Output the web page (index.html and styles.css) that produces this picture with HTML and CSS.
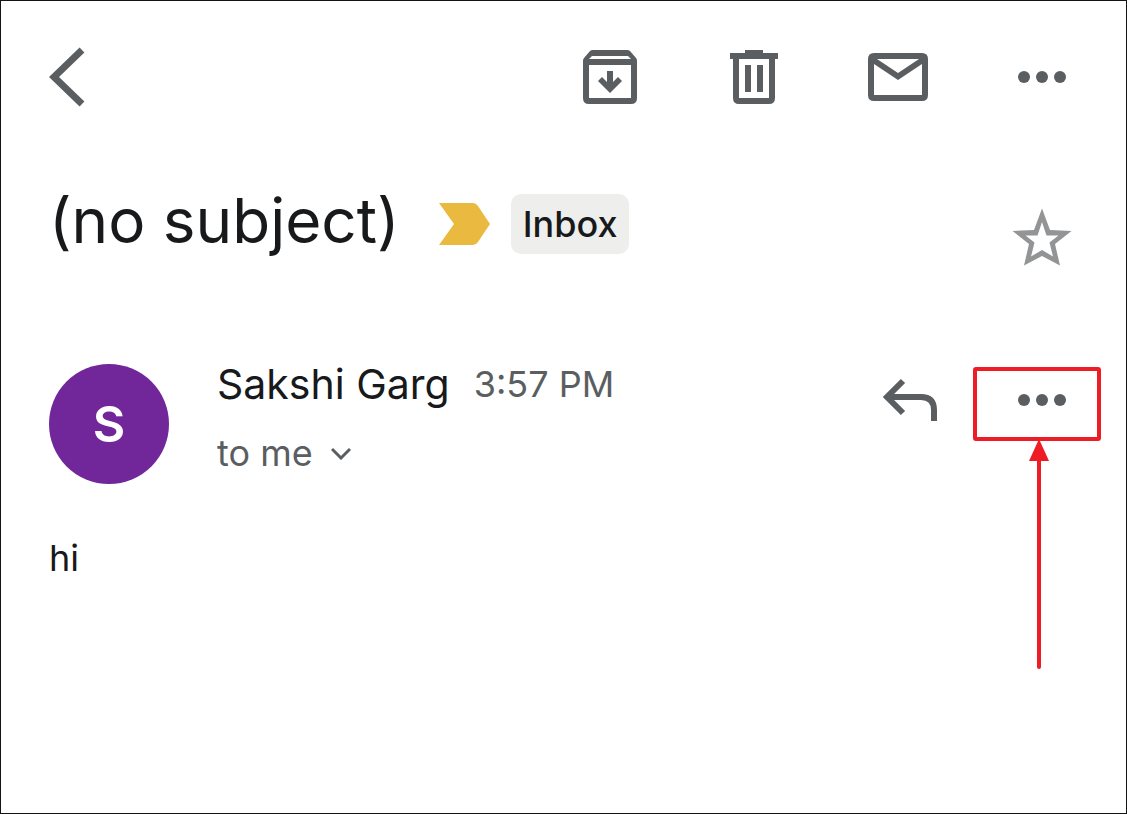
FILE: index.html
```html
<!DOCTYPE html>
<html lang="en">
<head>
    <meta charset="UTF-8">
    <meta name="viewport" content="width=device-width, initial-scale=1.0">
    <title>(no subject)</title>
    <link rel="stylesheet" href="styles.css">
</head>
<body>
    <header class="toolbar">
        <button class="back-btn" aria-label="Back">
            <svg width="36" height="60" viewBox="0 0 36 60"><path d="M33 3L5 30l28 27" fill="none" stroke="currentColor" stroke-width="7"/></svg>
        </button>
        <div class="toolbar-actions">
            <button class="icon-btn" aria-label="Archive">
                <svg viewBox="0 0 72 72"><path fill-rule="evenodd" d="M19 9h34q2 0 3 1l6 7q1 1 1 3v37q0 6-6 6H15q-6 0-6-6V20q0-2 1-3l6-7q1-1 3-1zM18 15l-3 3h42l-3-3zM15 24v33h42V24z"/><path d="M33 30h6v11l5-5 4 4-12 12-12-12 4-4 5 5z"/></svg>
            </button>
            <button class="icon-btn" aria-label="Delete">
                <svg viewBox="0 0 72 72"><path fill-rule="evenodd" d="M27 9h18v3h15v6h-3v39q0 6-6 6H21q-6 0-6-6V18h-3v-6h15zM21 18v39h30V18z"/><path d="M27 24h6v27h-6zM39 24h6v27h-6z"/></svg>
            </button>
            <button class="icon-btn" aria-label="Mark as unread">
                <svg viewBox="0 0 72 72"><path fill-rule="evenodd" d="M12 12h48q6 0 6 6v36q0 6-6 6H12q-6 0-6-6V18q0-6 6-6zM15 18l21 14 21-14zM12 23v31h48V23L36 39z"/></svg>
            </button>
            <button class="icon-btn" aria-label="More options">
                <svg viewBox="0 0 72 72"><circle cx="18" cy="36" r="6"/><circle cx="36" cy="36" r="6"/><circle cx="54" cy="36" r="6"/></svg>
            </button>
        </div>
    </header>

    <main>
        <div class="subject-row">
            <div class="subject">
                <h1>(no subject)</h1>
                <svg class="important" width="52" height="42" viewBox="0 0 52 42"><path d="M0 0h34q3 0 5 3l12 18-12 18q-2 3-5 3H0l15-21z"/></svg>
                <button class="label">Inbox</button>
            </div>
            <button class="icon-btn star" aria-label="Star">
                <svg viewBox="0 0 72 72"><path fill-rule="evenodd" d="M36 5.500L44 27l21.500 1L49 41l5 21.500L36 53l-18 9.500L23 41 6.500 28 28 27zM36 19l-4.500 13.500H19.500L28.500 39.500 25 53.500 36 47l11 6.500-3.500-14 9-7H40.500z"/></svg>
            </button>
        </div>

        <div class="message-header">
            <div class="avatar">S</div>
            <div class="sender">
                <div class="sender-line">
                    <span class="name">Sakshi Garg</span>
                    <span class="time">3:57 PM</span>
                </div>
                <button class="recipients">
                    to me
                    <svg width="20" height="14" viewBox="0 0 20 14"><path d="M1 3l9 9 9-9" fill="none" stroke="currentColor" stroke-width="3"/></svg>
                </button>
            </div>
            <div class="message-actions">
                <button class="icon-btn" aria-label="Reply">
                    <svg viewBox="0 0 72 72"><path d="M60 57V46q0-13-13-13H13M29 17L13 33l16 16" fill="none" stroke="currentColor" stroke-width="6"/></svg>
                </button>
                <div class="highlighted">
                    <button class="icon-btn" aria-label="More message options">
                        <svg viewBox="0 0 72 72"><circle cx="18" cy="36" r="6"/><circle cx="36" cy="36" r="6"/><circle cx="54" cy="36" r="6"/></svg>
                    </button>
                    <svg class="callout" width="128" height="302" viewBox="0 0 128 302"><rect x="2" y="2" width="124" height="70" rx="1" fill="none" stroke="currentColor" stroke-width="4"/><path d="M66 90v210" stroke="currentColor" stroke-width="4" stroke-linecap="round"/><path d="M66 72l10 22H56z" fill="currentColor"/></svg>
                </div>
            </div>
        </div>

        <p class="message-body">hi</p>
    </main>
</body>
</html>
```

FILE: styles.css
```css
* {
    margin: 0;
    padding: 0;
    box-sizing: border-box;
    font-family: Inter, 'Liberation Sans', sans-serif;
}

body {
    min-height: 100vh;
    padding: 40px 48px;
    border: 1px solid #121416;
    background: #fff;
    color: #17191b;
}

button {
    border: none;
    background: none;
    color: #5a5e61;
    cursor: pointer;
}

svg {
    display: block;
}

.toolbar {
    display: flex;
    justify-content: space-between;
    align-items: center;
}

.toolbar-actions {
    display: flex;
    gap: 72px;
}

.icon-btn {
    width: 72px;
    height: 72px;
    flex-shrink: 0;
}

.icon-btn svg {
    width: 72px;
    height: 72px;
    fill: currentColor;
}

.subject-row {
    display: flex;
    justify-content: space-between;
    align-items: flex-start;
    margin-top: 74px;
}

.subject {
    display: flex;
    align-items: center;
}

h1 {
    padding-bottom: 6px;
    font-size: 62px;
    font-weight: 400;
    line-height: 68px;
}

.important {
    margin-left: 39px;
    fill: #eab940;
}

.label {
    height: 60px;
    margin-left: 20px;
    padding: 0 12px;
    border-radius: 10px;
    background: #eeeeec;
    color: #17191b;
    font-size: 36px;
    font-weight: 500;
}

.star {
    margin-top: 16px;
    color: #929495;
}

.message-header {
    display: flex;
    margin-top: 89px;
}

.avatar {
    width: 120px;
    height: 120px;
    flex-shrink: 0;
    border-radius: 50%;
    background: #71279a;
    color: #fff;
    font-size: 50px;
    font-weight: 600;
    line-height: 120px;
    text-align: center;
}

.sender {
    flex: 1;
    margin-left: 48px;
}

.sender-line {
    display: flex;
    align-items: center;
    gap: 24px;
    line-height: 40px;
}

.name {
    font-size: 41px;
}

.time {
    color: #5a5e61;
    font-size: 36px;
}

.recipients {
    display: flex;
    align-items: center;
    gap: 18px;
    margin-top: 29px;
    font-size: 36px;
    line-height: 40px;
}

.message-actions {
    display: flex;
    gap: 60px;
}

.highlighted {
    position: relative;
}

/* red box and arrow pointing at the message menu */
.callout {
    position: absolute;
    top: 3px;
    left: -33px;
    color: #ee1c25;
    pointer-events: none;
}

.message-body {
    margin-top: 54px;
    font-size: 36px;
    line-height: 40px;
}
```
